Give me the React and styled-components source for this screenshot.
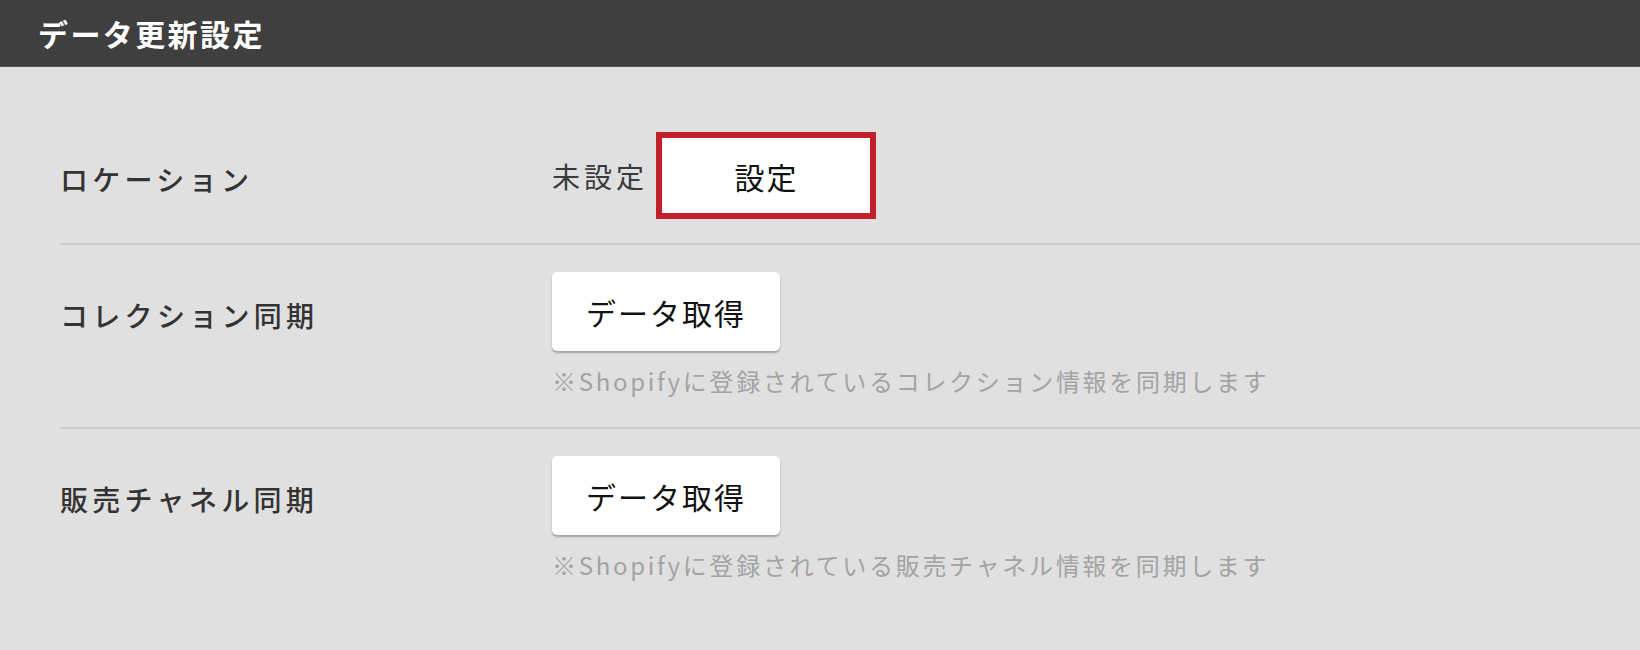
import React from 'react'
import styled, { createGlobalStyle } from 'styled-components'

const GlobalStyle = createGlobalStyle`
  html, body {
    margin: 0;
    padding: 0;
    background: #e0e0e0;
  }
  body {
    font-family: "Noto Sans CJK JP", "Noto Sans", sans-serif;
    color: #333;
  }
`

const Page = styled.div`
  min-height: 650px;
  background: #e0e0e0;
`

const Header = styled.header`
  height: 67px;
  display: flex;
  align-items: center;
  padding-left: 38px;
  background: #3f3f3f;
  border-bottom: 1px solid #555;
  box-sizing: border-box;
`

const Title = styled.h1`
  margin: 0;
  font-size: 30px;
  font-weight: 700;
  letter-spacing: 2.4px;
  color: #fff;
`

const Section = styled.section`
  padding-top: 42px;
  margin-left: 60px;
`

const Row = styled.div`
  display: grid;
  grid-template-columns: 492px 1fr;
  padding: 27px 0 28px;
  border-bottom: ${(p) => (p.$last ? 'none' : '2px solid #cecece')};
`

const Label = styled.div`
  margin-top: 22px;
  font-size: 28px;
  line-height: 42px;
  font-weight: 500;
  letter-spacing: 4.3px;
  color: #333;
`

const Value = styled.div`
  display: flex;
  flex-direction: column;
  align-items: flex-start;
`

const Inline = styled.div`
  display: flex;
  align-items: center;
  gap: 12px;
`

const Status = styled.span`
  font-size: 28px;
  letter-spacing: 4px;
  color: #3a3a3a;
`

const Button = styled.button`
  height: 79px;
  width: ${(p) => (p.$width ? `${p.$width}px` : 'auto')};
  padding: 0 34px;
  border: none;
  border-radius: 5px;
  background: #fff;
  box-shadow: 0 2px 2px rgba(0, 0, 0, 0.28);
  font-family: inherit;
  font-size: 30px;
  font-weight: 400;
  letter-spacing: 2px;
  color: #111;
  cursor: pointer;
`

const Highlight = styled.div`
  position: relative;
  display: inline-flex;

  &::after {
    content: '';
    position: absolute;
    top: -4px;
    left: -4px;
    right: -3px;
    bottom: -4px;
    border: 6px solid #c0212b;
    pointer-events: none;
  }
`

const Note = styled.p`
  margin: 12px 0 0;
  font-size: 24px;
  line-height: 36px;
  letter-spacing: 2.7px;
  color: #a3a3a3;
`

export default function App() {
  return (
    <Page>
      <GlobalStyle />
      <Header>
        <Title>データ更新設定</Title>
      </Header>
      <Section>
        <Row>
          <Label>ロケーション</Label>
          <Value>
            <Inline>
              <Status>未設定</Status>
              <Highlight>
                <Button $width={213}>設定</Button>
              </Highlight>
            </Inline>
          </Value>
        </Row>
        <Row>
          <Label>コレクション同期</Label>
          <Value>
            <Button>データ取得</Button>
            <Note>※Shopifyに登録されているコレクション情報を同期します</Note>
          </Value>
        </Row>
        <Row $last>
          <Label>販売チャネル同期</Label>
          <Value>
            <Button>データ取得</Button>
            <Note>※Shopifyに登録されている販売チャネル情報を同期します</Note>
          </Value>
        </Row>
      </Section>
    </Page>
  )
}
